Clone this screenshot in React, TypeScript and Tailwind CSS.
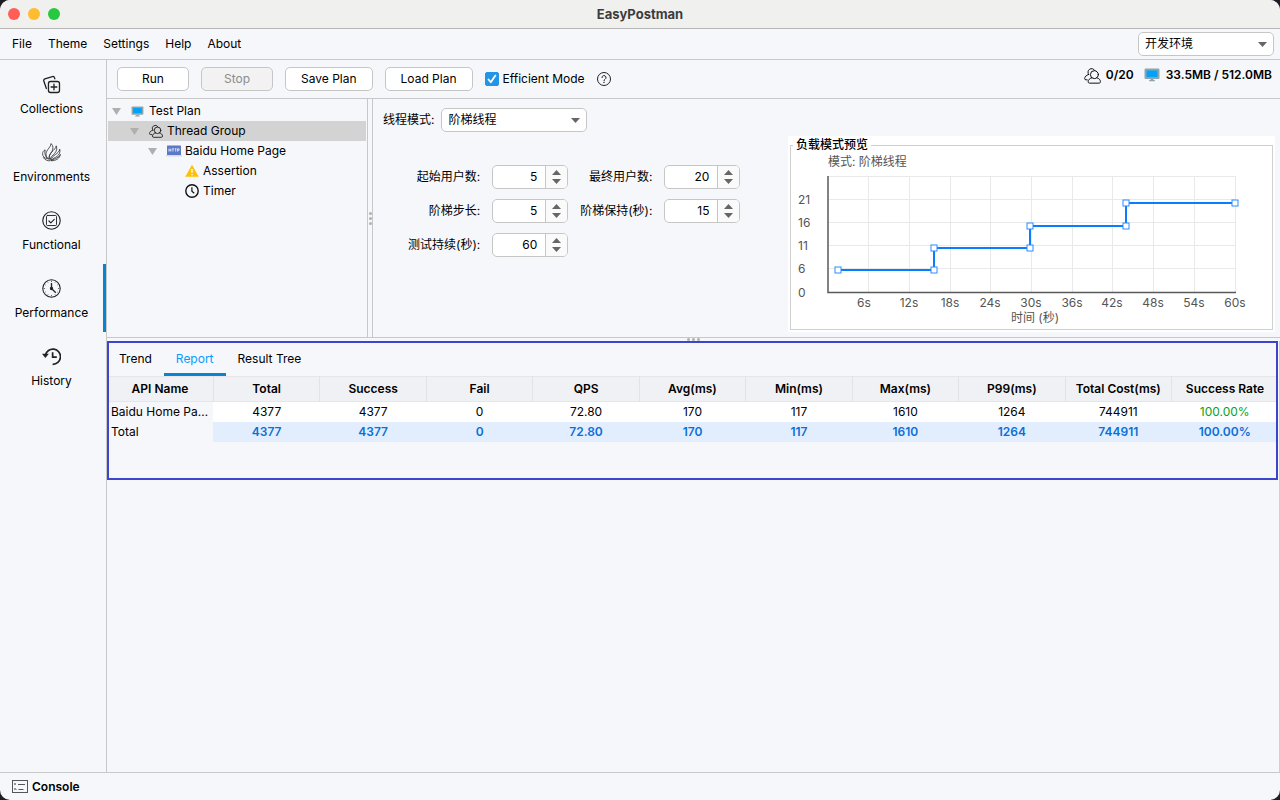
import { Fragment, ReactNode, useState } from "react"

type IconProps = { className?: string }

function CollectionsIcon({ className }: IconProps) {
  return (
    <svg className={className} viewBox="0 0 20 20" fill="none" stroke="currentColor" strokeWidth="1.4" strokeLinecap="round" strokeLinejoin="round">
      <path d="M4.600 14.200 1.900 6.400a1.800 1.800 0 0 1 1.100-2.300l8-2.500a1.700 1.700 0 0 1 2.100 1.200l.4 1.200" />
      <rect x="6.800" y="6.800" width="11.600" height="11.600" rx="2.200" />
      <path d="M12.600 9.600v6M9.600 12.600h6" />
    </svg>
  )
}

function EnvironmentsIcon({ className }: IconProps) {
  return (
    <svg className={className} viewBox="0 0 20 20" fill="none" stroke="currentColor" strokeWidth="0.8" strokeLinejoin="round">
      <path d="M9.600.600c2.200 2.300 2.600 5 .8 8.400-1.400 2.600-3.400 4.600-3 8.200C4.300 15.200 3.500 12 5 8.700 6.200 6 9 4.400 9.600.600Z" />
      <path d="M15 3c1.200 3 .3 5.600-1.700 8-1.900 2.200-4.500 3.600-4.700 6.700-2-3.200-.6-6 1.800-8.400C12.500 7.200 14.600 5.600 15 3Z" />
      <path d="M18.700 6.500c.7 3.400-.5 5.700-2.900 7.600-2 1.500-4.600 2-6.200 4.300.3-3.400 2.300-4.700 4.600-6.300 2.200-1.500 4-3 4.500-5.600Z" />
      <path d="M19.300 12c-.6 4-4.300 6.800-9.700 6.700 2-1.600 4-1.900 6-2.900 1.800-.9 3-2.100 3.700-3.800Z" />
      <path d="M3.300 7.200c-.7 3.300-.2 6.400 2.600 9.300C2.800 16.200.6 14.200.6 11.300c0-1.900 1.200-3.300 2.700-4.100ZM1.200 15c1.700 2.700 4.300 3.900 7.700 3.700" />
    </svg>
  )
}

function FunctionalIcon({ className }: IconProps) {
  return (
    <svg className={className} viewBox="0 0 20 20" fill="none" stroke="currentColor" strokeWidth="1.2" strokeLinecap="round" strokeLinejoin="round">
      <circle cx="10" cy="10" r="9.200" />
      <rect x="4.700" y="4.700" width="10.600" height="10.600" rx="1.200" strokeWidth="1" />
      <path d="m7.300 10.500 2 2 3.600-3.600" />
    </svg>
  )
}

function PerformanceIcon({ className }: IconProps) {
  return (
    <svg className={className} viewBox="0 0 20 20" fill="none" stroke="currentColor" strokeWidth="1.1">
      <circle cx="10" cy="10" r="9.200" />
      <path d="M10 4.200V10l4.500 4.500" strokeWidth="1.400" />
      <circle cx="10" cy="10" r="1.200" fill="currentColor" />
      <path d="M10 1.800v1.400M10 16.800v1.400M1.800 10h1.400M16.800 10h1.400M5.900 2.900l.5.900M13.600 16.200l.5.900M14.100 2.900l-.5.900M6.400 16.200l-.5.900M2.900 5.900l.9.500M16.200 13.600l.9.500M2.900 14.100l.9-.5M16.200 6.400l.9-.5" strokeWidth="0.700" />
    </svg>
  )
}

function HistoryIcon({ className }: IconProps) {
  return (
    <svg className={className} viewBox="0 0 20 20" fill="none" stroke="currentColor" strokeWidth="1.800">
      <path d="M3.600 8.600A8 8 0 1 1 11.200 18.200" />
      <path d="M11.200 5.600v5h4.400" />
      <path d="M0 7.200h7.200L3.500 11.500Z" fill="currentColor" stroke="none" />
    </svg>
  )
}

function UsersIcon({ className }: IconProps) {
  return (
    <svg className={className} viewBox="0 0 18 18" fill="none" stroke="currentColor" strokeWidth="1" strokeLinecap="round" strokeLinejoin="round">
      <path d="M4.900 7.900A3.900 3.900 0 1 1 11.400 3.600" />
      <path d="M4.900 7.900C2.200 8.800.7 10.400.7 12.300c0 .9.600 1.300 1.500 1.300h1.200" />
      <circle cx="11" cy="8.100" r="4.200" />
      <path d="M8.300 11.400c-2.500.8-3.900 2.300-3.900 4.200 0 1 .6 1.500 1.600 1.500h9.800c1 0 1.600-.5 1.600-1.500 0-1.900-1.300-3.400-3.700-4.200" />
    </svg>
  )
}

function MonitorIcon({ className }: IconProps) {
  return (
    <svg className={className} viewBox="0 0 16 14">
      <rect x="0.500" y="0.500" width="15" height="10.500" rx="1.200" fill="#90a4ae" />
      <rect x="2.500" y="2.500" width="11" height="6.500" fill="#03a2f8" />
      <path d="M6.500 11h3v1h1.300v1.300H5.200V12h1.300Z" fill="#90a4ae" />
    </svg>
  )
}

function HttpIcon({ className }: IconProps) {
  return (
    <svg className={className} viewBox="0 0 16 12">
      <rect x="1" y="0.500" width="14" height="9.500" rx="0.500" fill="#5c79c7" />
      <path d="M0 10.500h16v.8H0Z" fill="#b4bfdb" />
      <path d="M3 3.600v3M4.900 3.600v3M3 5.100h1.900M6 3.800h1.900M7 3.800v2.800M8.700 3.800h1.900M9.700 3.800v2.800M11.600 6.600V3.800h1.500v1.500h-1.500" stroke="#fff" strokeWidth="0.700" fill="none" />
    </svg>
  )
}

function WarningIcon({ className }: IconProps) {
  return (
    <svg className={className} viewBox="0 0 14 14">
      <path d="M7 1.200 13.300 12.600H.7Z" fill="#ffc107" stroke="#ffc107" strokeLinejoin="round" strokeWidth="0.600" />
      <path d="M7 5v3.800M7 9.900v1.300" stroke="#fff" strokeWidth="1.300" />
    </svg>
  )
}

function TimerIcon({ className }: IconProps) {
  return (
    <svg className={className} viewBox="0 0 14 14" fill="none" stroke="#111" strokeWidth="1.400">
      <circle cx="7" cy="7" r="6.200" />
      <path d="M6.900 3.300v4l2.300 1.900" strokeWidth="1.200" />
    </svg>
  )
}

function ConsoleIcon({ className }: IconProps) {
  return (
    <svg className={className} viewBox="0 0 16 13" fill="none" stroke="#555" strokeWidth="1">
      <rect x="0.500" y="0.500" width="15" height="12" />
      <path d="M3 3v2M3 8v2" strokeWidth="1.200" />
      <path d="M6 4.500h7M4.500 9.500H5M6.500 9.500h5" />
    </svg>
  )
}

const navItems = [
  { label: "Collections", icon: CollectionsIcon },
  { label: "Environments", icon: EnvironmentsIcon },
  { label: "Functional", icon: FunctionalIcon },
  { label: "Performance", icon: PerformanceIcon },
  { label: "History", icon: HistoryIcon },
]

const treeRows = [
  { label: "Test Plan", icon: <MonitorIcon className="h-[11px] w-[13px]" />, indent: "pl-1", open: true },
  { label: "Thread Group", icon: <UsersIcon className="size-[14px]" />, indent: "pl-[22px]", open: true },
  { label: "Baidu Home Page", icon: <HttpIcon className="h-3 w-4 shrink-0" />, indent: "pl-[40px]", open: true },
  { label: "Assertion", icon: <WarningIcon className="size-[14px]" />, indent: "pl-[58px]", open: false },
  { label: "Timer", icon: <TimerIcon className="size-[14px]" />, indent: "pl-[58px]", open: false },
]

const fields = [
  { id: "start", label: "起始用户数:", value: 5 },
  { id: "end", label: "最终用户数:", value: 20 },
  { id: "step", label: "阶梯步长:", value: 5 },
  { id: "hold", label: "阶梯保持(秒):", value: 15 },
  { id: "duration", label: "测试持续(秒):", value: 60 },
]

const columns = ["API Name", "Total", "Success", "Fail", "QPS", "Avg(ms)", "Min(ms)", "Max(ms)", "P99(ms)", "Total Cost(ms)", "Success Rate"]
const stats = ["4377", "4377", "0", "72.80", "170", "117", "1610", "1264", "744911", "100.00%"]

const xTicks = [
  { x: 77, label: "6s" },
  { x: 118, label: "12s" },
  { x: 159, label: "18s" },
  { x: 199, label: "24s" },
  { x: 240, label: "30s" },
  { x: 281, label: "36s" },
  { x: 321, label: "42s" },
  { x: 362, label: "48s" },
  { x: 403, label: "54s" },
  { x: 444, label: "60s" },
]
const yTicks = [
  { y: 46, label: "21" },
  { y: 69, label: "16" },
  { y: 92, label: "11" },
  { y: 115, label: "6" },
  { y: 139, label: "0" },
]
const points = [[47, 117], [143, 117], [143, 95], [239, 95], [239, 73], [335, 73], [335, 50], [444, 50]]

function Button({ children, disabled }: { children: ReactNode; disabled?: boolean }) {
  return (
    <button
      disabled={disabled}
      className="h-6 min-w-[72px] rounded-[5px] border border-[#c6c6c6] bg-white px-[15px] disabled:bg-[#f2f2f2] disabled:text-[#8c8c8c]"
    >
      {children}
    </button>
  )
}

function Select({ id, label, value, width }: { id: string; label?: string; value: string; width: string }) {
  return (
    <div className={`relative ${width}`}>
      <select id={id} aria-label={label} className="h-6 w-full appearance-none rounded-[5px] border border-[#c6c6c6] bg-white pl-[6px] pr-6">
        <option>{value}</option>
      </select>
      <svg className="pointer-events-none absolute right-[7px] top-[10px] h-[5px] w-[9px]" viewBox="0 0 9 5">
        <path d="M0 0h9L4.500 5Z" fill="#666" />
      </svg>
    </div>
  )
}

function Spinner({ id, initial }: { id: string; initial: number }) {
  const [value, setValue] = useState(initial)

  return (
    <div className="flex h-6 w-[76px] overflow-hidden rounded-[5px] border border-[#c6c6c6] bg-white">
      <input
        id={id}
        type="text"
        value={value}
        onChange={(e) => setValue(Number(e.target.value) || 0)}
        className="w-0 min-w-0 flex-1 pr-2 text-right outline-none"
      />
      <div className="flex w-[22px] flex-col items-center justify-center gap-1 border-l border-[#c6c6c6] bg-[#fafafa]">
        <button aria-label="+" onClick={() => setValue(value + 1)}>
          <svg className="h-[5px] w-[9px]" viewBox="0 0 9 5"><path d="M0 5h9L4.500 0Z" fill="#666" /></svg>
        </button>
        <button aria-label="-" onClick={() => setValue(value - 1)}>
          <svg className="h-[5px] w-[9px]" viewBox="0 0 9 5"><path d="M0 0h9L4.500 5Z" fill="#666" /></svg>
        </button>
      </div>
    </div>
  )
}

function LoadChart() {
  return (
    <svg className="block h-[176px] w-[481px]" viewBox="0 0 481 176" fontSize="12" fill="#555">
      <text x="37" y="13">模式: 阶梯线程</text>
      <g stroke="#e9e9e9" strokeWidth="1">
        {[23, 46, 69, 92, 115].map((y) => (
          <path key={y} d={`M38 ${y + 0.5}H444`} />
        ))}
        {xTicks.map(({ x }) => (
          <path key={x} d={`M${x + 0.5} 23V139`} />
        ))}
      </g>
      <path d="M37 23V139.500H445" fill="none" stroke="#5a5a5a" strokeWidth="1.500" />
      {yTicks.map(({ y, label }) => (
        <text key={label} x="7" y={y + 5}>{label}</text>
      ))}
      {xTicks.map(({ x, label }) => (
        <text key={label} x={label === "6s" ? x - 4 : x} y="154" textAnchor="middle">{label}</text>
      ))}
      <text x="244" y="169" textAnchor="middle">时间 (秒)</text>
      <polyline points={points.join(" ")} fill="none" stroke="#0a7cff" strokeWidth="2" />
      {points.map(([x, y]) => (
        <rect key={`${x}-${y}`} x={x - 3} y={y - 3} width="6" height="6" fill="#fff" stroke="#2a8cff" />
      ))}
    </svg>
  )
}

function ReportTable() {
  return (
    <table className="w-full table-fixed border-collapse">
      <thead>
        <tr className="h-[25px] border-y border-[#e6e6e8] bg-[#f0f1f4]">
          {columns.map((name) => (
            <th key={name} className="whitespace-nowrap border-r border-[#e2e3e6] p-0 font-semibold last:border-r-0">{name}</th>
          ))}
        </tr>
      </thead>
      <tbody className="text-center">
        <tr className="h-5">
          <td className="truncate p-0 pl-1 pr-1 text-left">Baidu Home Page</td>
          {stats.map((value, i) => (
            <td key={i} className="bg-white p-0 last:text-[#08a319]">{value}</td>
          ))}
        </tr>
        <tr className="h-5">
          <td className="p-0 pl-1 text-left">Total</td>
          {stats.map((value, i) => (
            <td key={i} className="bg-[#e2eefe] p-0 font-semibold text-[#0a6fd8]">{value}</td>
          ))}
        </tr>
      </tbody>
    </table>
  )
}

export default function App() {
  const [tab, setTab] = useState("Report")

  return (
    <div className="h-screen bg-[#1d1d22] font-['Inter','Noto_Sans_CJK_SC',sans-serif] text-[12px] leading-4 text-black">
      <div className="flex h-full flex-col overflow-hidden rounded-[10px] bg-[#f5f7fb]">
        <header className="grid h-[29px] shrink-0 grid-cols-[1fr_auto_1fr] items-center border-b border-[#b8b8b8] bg-[#f0f0ee] px-2">
          <div className="flex gap-2">
            <span className="size-3 rounded-full bg-[#ff5f57]" />
            <span className="size-3 rounded-full bg-[#febc2e]" />
            <span className="size-3 rounded-full bg-[#28c840]" />
          </div>
          <h1 className="text-[13px] font-bold text-[#3c3c3c]">EasyPostman</h1>
        </header>

        <nav className="flex h-[31px] shrink-0 items-center gap-4 border-b border-[#c8c8c8] pl-3 pr-[6px]">
          {["File", "Theme", "Settings", "Help", "About"].map((item) => (
            <button key={item}>{item}</button>
          ))}
          <div className="ml-auto">
            <Select id="environment" label="开发环境" value="开发环境" width="w-[136px]" />
          </div>
        </nav>

        <div className="flex min-h-0 flex-1">
          <aside className="w-[107px] shrink-0 border-r border-[#c8c8c8]">
            {navItems.map(({ label, icon: Icon }) => (
              <button
                key={label}
                className={`flex h-[68px] w-full flex-col items-center gap-[7px] border-r-[3px] pt-[15px] ${
                  label === "Performance" ? "border-[#0a84cf]" : "border-transparent"
                }`}
              >
                <Icon className="size-[19px] text-[#222]" />
                {label}
              </button>
            ))}
          </aside>

          <main className="flex min-w-0 flex-1 flex-col">
            <div className="flex h-[39px] shrink-0 items-center gap-3 border-b border-[#c8c8c8] pl-[10px] pr-2">
              <Button>Run</Button>
              <Button disabled>Stop</Button>
              <Button>Save Plan</Button>
              <Button>Load Plan</Button>
              <label className="flex items-center gap-1">
                <span className="relative flex size-[14px]">
                  <input type="checkbox" defaultChecked className="peer size-[14px] appearance-none rounded-[2px] border border-[#c6c6c6] bg-white checked:border-[#2196e8] checked:bg-[#2196e8]" />
                  <svg className="pointer-events-none absolute inset-0 hidden size-[14px] peer-checked:block" viewBox="0 0 14 14" fill="none" stroke="#fff" strokeWidth="1.800" strokeLinecap="round" strokeLinejoin="round">
                    <path d="m3.500 7.500 2.300 2.700 4.600-6.600" />
                  </svg>
                </span>
                Efficient Mode
              </label>
              <button aria-label="Efficient Mode">
                <svg className="size-[14px]" viewBox="0 0 14 14" fill="none" stroke="#222" strokeWidth="1">
                  <circle cx="7" cy="7" r="6.500" />
                  <path d="M5 5.600a2 2 0 1 1 3 1.700c-.7.400-1 .8-1 1.500" strokeLinecap="round" />
                  <circle cx="7" cy="10.500" r="0.300" />
                </svg>
              </button>
              <div className="mb-2 ml-auto flex items-center font-semibold">
                <UsersIcon className="mr-[5px] size-[17px]" />
                0/20
                <MonitorIcon className="ml-[10px] mr-[6px] h-[14px] w-4" />
                33.5MB / 512.0MB
              </div>
            </div>

            <section className="flex shrink-0 border-b border-[#c8c8c8]">
              <ul className="w-[260px] shrink-0 px-px pt-[2px]">
                {treeRows.map(({ label, icon, indent, open }) => (
                  <li key={label} className={`flex h-5 items-center ${indent} ${label === "Thread Group" ? "bg-[#d3d3d3]" : ""}`}>
                    <svg className={`h-[7px] w-[9px] shrink-0 ${open ? "" : "invisible"}`} viewBox="0 0 9 7">
                      <path d="M0 0h9L4.500 7Z" fill="#afafaf" />
                    </svg>
                    <span className="ml-[9px] mr-1 flex w-[15px] shrink-0 justify-center">{icon}</span>
                    {label}
                  </li>
                ))}
              </ul>
              <div className="flex w-[6px] shrink-0 flex-col items-center justify-center gap-[2px] border-x border-[#c8c8c8]">
                <span className="size-[3px] rounded-full bg-[#b0b0b0]" />
                <span className="size-[3px] rounded-full bg-[#b0b0b0]" />
                <span className="size-[3px] rounded-full bg-[#b0b0b0]" />
              </div>

              <form className="min-w-0 flex-1 pl-[10px] pt-[9px]" onSubmit={(e) => e.preventDefault()}>
                <div className="flex items-center gap-[7px]">
                  <label htmlFor="mode">线程模式:</label>
                  <Select id="mode" value="阶梯线程" width="w-[146px]" />
                </div>
                <div className="mt-[33px] grid grid-cols-[auto_auto_auto_auto] items-center justify-start gap-x-3 gap-y-[10px] pl-[25px]">
                  {fields.map(({ id, label, value }) => (
                    <Fragment key={id}>
                      <label htmlFor={id} className="text-right">{label}</label>
                      <Spinner id={id} initial={value} />
                    </Fragment>
                  ))}
                </div>
              </form>

              <div className="shrink-0 pb-[5px] pr-[5px] pt-[37px]">
                <div className="bg-white px-[2px] pb-[2px] pt-px">
                  <fieldset className="border border-[#cfcfcf]">
                    <legend className="ml-[2px] px-[3px] font-medium">负载模式预览</legend>
                    <LoadChart />
                  </fieldset>
                </div>
              </div>
            </section>

            <div className="flex h-[3px] shrink-0 items-center justify-center gap-[2px]">
              <span className="size-[3px] rounded-full bg-[#b0b0b0]" />
              <span className="size-[3px] rounded-full bg-[#b0b0b0]" />
              <span className="size-[3px] rounded-full bg-[#b0b0b0]" />
            </div>

            <section className="flex-1 border-r border-[#d0d0d0] pr-px">
              <div className="pb-[38px] outline-2 -outline-offset-2 outline-[#3d45cc]">
                <div role="tablist" className="flex h-[35px]">
                  {["Trend", "Report", "Result Tree"].map((name) => (
                    <button
                      key={name}
                      role="tab"
                      aria-selected={tab === name}
                      onClick={() => setTab(name)}
                      className={`border-b-[3px] px-3 pt-1 ${
                        tab === name ? "border-[#0a84cf] text-[#0a9bff]" : "border-transparent"
                      }`}
                    >
                      {name}
                    </button>
                  ))}
                </div>
                <ReportTable />
              </div>
            </section>
          </main>
        </div>

        <footer className="flex h-7 shrink-0 items-center border-t border-[#c8c8c8] pl-3">
          <button className="flex items-center gap-1 font-semibold">
            <ConsoleIcon className="h-[13px] w-4" />
            Console
          </button>
        </footer>
      </div>
    </div>
  )
}
